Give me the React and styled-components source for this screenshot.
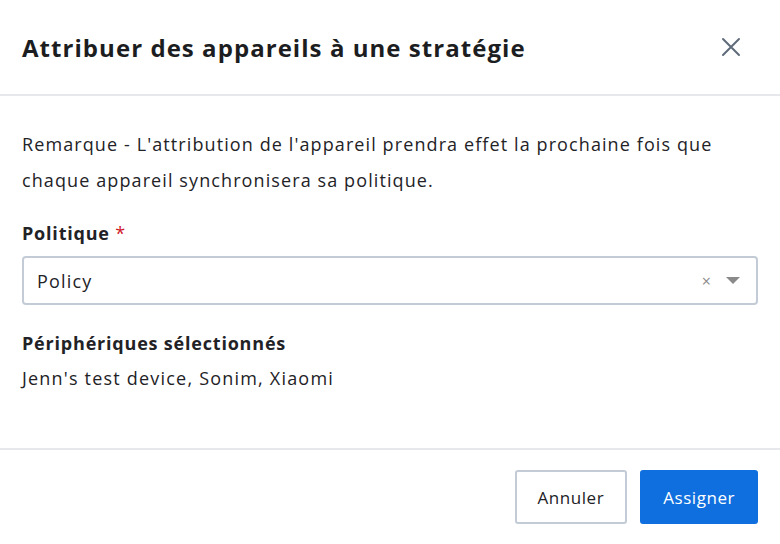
import React from 'react'
import styled, { createGlobalStyle } from 'styled-components'

const Global = createGlobalStyle`
  html, body { margin: 0; padding: 0; background: #fff; }
  body { font-family: "Open Sans", "Liberation Sans", sans-serif; color: #222226; }
  * { box-sizing: border-box; }
`

function CloseIcon() {
  return (
    <svg width="20" height="20" viewBox="0 0 20 20" fill="none">
      <path d="M2 2 L18 18 M18 2 L2 18" stroke="#5f6b7a" strokeWidth="2" strokeLinecap="round" />
    </svg>
  )
}

function App() {
  return (
    <>
      <Global />
      <Modal>
        <Header>
          <Title>Attribuer des appareils à une stratégie</Title>
          <CloseButton aria-label="Fermer"><CloseIcon /></CloseButton>
        </Header>
        <Body>
          <Note>
            Remarque - L'attribution de l'appareil prendra effet la prochaine fois que chaque appareil synchronisera sa politique.
          </Note>
          <Field>
            <Label>Politique <Required>*</Required></Label>
            <Select>
              <Value>Policy</Value>
              <Clear>×</Clear>
              <Caret />
            </Select>
          </Field>
          <Field>
            <Label>Périphériques sélectionnés</Label>
            <Devices>Jenn's test device, Sonim, Xiaomi</Devices>
          </Field>
        </Body>
        <Footer>
          <Button>Annuler</Button>
          <Button primary>Assigner</Button>
        </Footer>
      </Modal>
    </>
  )
}

const Modal = styled.div`
  width: 780px;
  height: 544px;
  background: #fff;
  display: flex;
  flex-direction: column;
`

const Header = styled.header`
  height: 96px;
  padding: 0 22px;
  display: flex;
  align-items: center;
  justify-content: space-between;
  border-bottom: 2px solid #e7e8ec;
`

const Title = styled.h1`
  margin: 0;
  font-size: 24px;
  font-weight: 700;
  letter-spacing: 1.05px;
  color: #1c1d21;
`

const CloseButton = styled.button`
  border: 0;
  background: none;
  padding: 0;
  margin-right: 17px;
  display: flex;
  cursor: pointer;
`

const Body = styled.div`
  padding: 30px 22px 0;
  height: 354px;
  border-bottom: 2px solid #e7e8ec;
`

const Note = styled.p`
  margin: 0 0 23px;
  font-size: 18px;
  line-height: 36px;
  letter-spacing: 1.1px;
  color: #232327;
`

const Field = styled.div`
  margin-bottom: 26px;
`

const Label = styled.div`
  font-size: 18px;
  font-weight: 700;
  line-height: 24px;
  letter-spacing: 0.8px;
  margin-bottom: 11px;
  color: #222226;
`

const Required = styled.span`
  color: #d0182a;
  font-weight: 400;
`

const Select = styled.div`
  height: 49px;
  border: 2px solid #c3ccd6;
  border-radius: 4px;
  padding: 0 16px 0 13px;
  display: flex;
  align-items: center;
`

const Value = styled.span`
  flex: 1;
  font-size: 18px;
  letter-spacing: 1.2px;
  color: #232327;
`

const Clear = styled.span`
  font-size: 16px;
  color: #8a8a8a;
  margin-right: 15px;
`

const Caret = styled.span`
  width: 0;
  height: 0;
  border-left: 7px solid transparent;
  border-right: 7px solid transparent;
  border-top: 7px solid #8a8a8a;
`

const Devices = styled.div`
  font-size: 18px;
  line-height: 24px;
  letter-spacing: 1.2px;
  margin-top: 2px;
`

const Footer = styled.footer`
  flex: 1;
  padding: 0 22px;
  display: flex;
  align-items: center;
  justify-content: flex-end;
  gap: 13px;
`

const Button = styled.button`
  height: 54px;
  padding: 0 21px;
  border-radius: 3px;
  font-family: inherit;
  font-size: 17px;
  letter-spacing: 0.55px;
  cursor: pointer;
  border: 2px solid ${p => (p.primary ? '#0f6fde' : '#c3ccd6')};
  background: ${p => (p.primary ? '#0f6fde' : '#fff')};
  color: ${p => (p.primary ? '#fff' : '#222226')};
`

export default App
